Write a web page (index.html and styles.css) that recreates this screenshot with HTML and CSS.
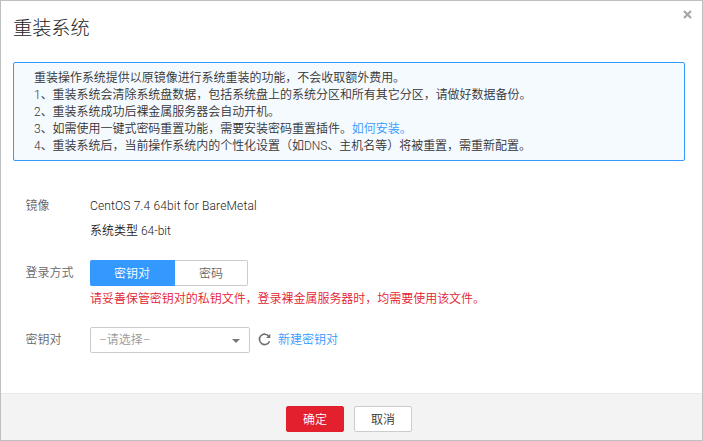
FILE: index.html
```html
<!DOCTYPE html>
<html lang="zh-CN">
<head>
<meta charset="utf-8">
<title>重装系统</title>
<link rel="stylesheet" href="styles.css">
</head>
<body>
<div class="dialog">
  <header class="header">
    <h1 class="title">重装系统</h1>
    <svg class="close" width="9" height="9" viewBox="0 0 9 9"><path d="M1 1L8 8M8 1L1 8" stroke="#a6a6a6" stroke-width="2.2" fill="none"/></svg>
  </header>
  <main class="body">
    <div class="notice">
      <p>重装操作系统提供以原镜像进行系统重装的功能，不会收取额外费用。</p>
      <p>1、重装系统会清除系统盘数据，包括系统盘上的系统分区和所有其它分区，请做好数据备份。</p>
      <p>2、重装系统成功后裸金属服务器会自动开机。</p>
      <p>3、如需使用一键式密码重置功能，需要安装密码重置插件。<a class="link">如何安装。</a></p>
      <p>4、重装系统后，当前操作系统内的个性化设置（如DNS、主机名等）将被重置，需重新配置。</p>
    </div>
    <div class="row image-row">
      <div class="label">镜像</div>
      <div class="value">
        <p class="text latin">CentOS 7.4 64bit for BareMetal</p>
        <p class="text">系统类型 64-bit</p>
      </div>
    </div>
    <div class="row login-row">
      <div class="label">登录方式</div>
      <div class="value">
        <div class="tabs"><div class="tab active">密钥对</div><div class="tab">密码</div></div>
        <p class="warning">请妥善保管密钥对的私钥文件，登录裸金属服务器时，均需要使用该文件。</p>
      </div>
    </div>
    <div class="row key-row">
      <div class="label">密钥对</div>
      <div class="select"><span>–请选择–</span><svg width="8" height="4" viewBox="0 0 8 4"><path d="M0 0H8L4 4Z" fill="#777"/></svg></div>
      <svg class="refresh" width="13" height="13" viewBox="0 0 13 13"><path d="M10.9 3.4A5.2 5.2 0 1 0 11.5 8.2" fill="none" stroke="#707070" stroke-width="1.6"/><path d="M12.3 .7V5H8Z" fill="#707070"/></svg>
      <a class="link">新建密钥对</a>
    </div>
  </main>
  <footer class="footer">
    <button class="button primary">确定</button>
    <button class="button">取消</button>
  </footer>
</div>
</body>
</html>
```
FILE: styles.css
```css
* { box-sizing: border-box; }
body, h1, p { margin: 0; }
body {
  font: 350 12px/17px Roboto, "Noto Sans CJK SC", sans-serif;
  color: #333;
  background: #fff;
}
.dialog {
  display: flex;
  flex-direction: column;
  width: 703px;
  height: 441px;
  border: 1px solid #bfbfbf;
}
.header {
  display: flex;
  justify-content: space-between;
  height: 61px;
  padding: 9px 10px 0 12px;
}
.title { font-size: 19.2px; line-height: 38px; font-weight: 300; color: #222; }
.close { display: block; }
.body { flex: 1; }
.notice {
  width: 672px;
  height: 99px;
  margin-left: 12px;
  padding: 7px 20px 0 20px;
  border: 1px solid #3399ff;
  border-radius: 2px;
  background: #f5faff;
  white-space: nowrap;
  letter-spacing: -0.03px;
}
.link { color: #3399ff; }
.row { display: flex; margin-left: 24.5px; }
.label { width: 64.5px; color: #666; line-height: 26px; }
.image-row { margin-top: 32px; }
.text { line-height: 25px; color: #222; }
.latin { padding-top: 1px; letter-spacing: 0.15px; }
.login-row { margin-top: 16px; }
.tabs { display: flex; width: 158px; height: 26px; }
.tab {
  width: 73px;
  border: 1px solid #ccc;
  border-left: 0;
  border-radius: 0 2px 2px 0;
  color: #666;
  line-height: 27px;
  text-align: center;
}
.tab.active {
  width: 85px;
  border-color: #3399ff;
  border-radius: 2px 0 0 2px;
  background: #3399ff;
  color: #fff;
}
.warning { margin-top: 5px; color: #e3202e; letter-spacing: -0.03px; }
.key-row { align-items: center; height: 26px; margin-top: 19px; }
.select {
  display: flex;
  align-items: center;
  justify-content: space-between;
  width: 160px;
  height: 26px;
  padding: 1px 9px 0 8px;
  border: 1px solid #ccc;
  border-radius: 2px;
  color: #999;
}
.refresh { margin: 0 7px 2px 8px; }
.footer {
  display: flex;
  justify-content: center;
  gap: 10px;
  height: 47px;
  padding-top: 12px;
  padding-right: 5px;
  border-top: 1px solid #e9e9e9;
  background: #f3f3f3;
}
.button {
  width: 58px;
  height: 26px;
  padding: 2px 0 0;
  border: 1px solid #ccc;
  border-radius: 2px;
  background: #fff;
  color: #333;
  font: inherit;
}
.primary { border-color: #e3202e; background: #e3202e; color: #fff; }
```
